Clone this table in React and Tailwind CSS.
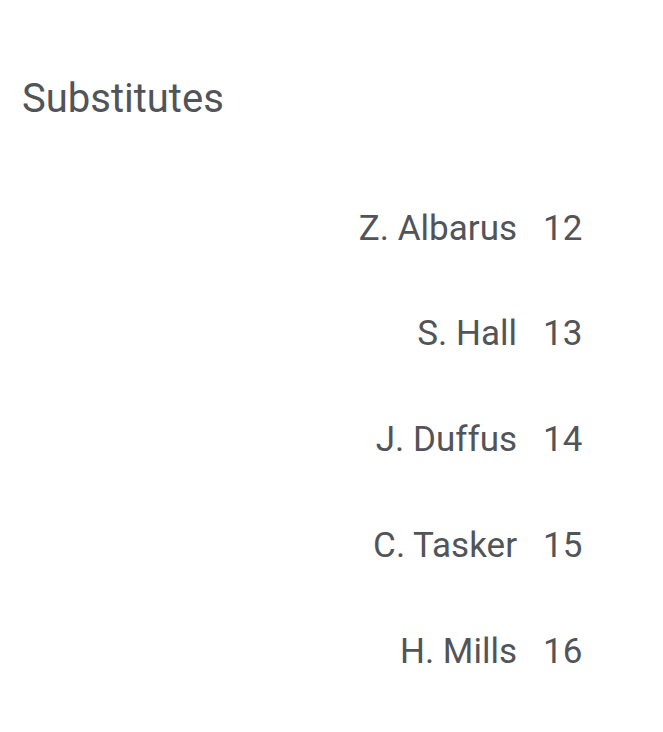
import React from "react";

const subs = [
  { name: "Z. Albarus", num: 12 },
  { name: "S. Hall", num: 13 },
  { name: "J. Duffus", num: 14 },
  { name: "C. Tasker", num: 15 },
  { name: "H. Mills", num: 16 },
];

export default function App() {
  return (
    <div className="w-[663px] h-[732px] bg-white text-[#515458] font-['Roboto',sans-serif]">
      {/* Heading */}
      <h1 className="pt-[75px] pl-[22px] text-[40px] leading-[48px] font-normal">Substitutes</h1>

      {/* Players */}
      <ul className="mt-[53px] pr-[81px] flex flex-col">
        {subs.map((s) => (
          <li key={s.num} className="h-[105.8px] flex items-center justify-end gap-[26px] text-[35px]">
            <span>{s.name}</span>
            <span className="w-[39px]">{s.num}</span>
          </li>
        ))}
      </ul>
    </div>
  );
}
